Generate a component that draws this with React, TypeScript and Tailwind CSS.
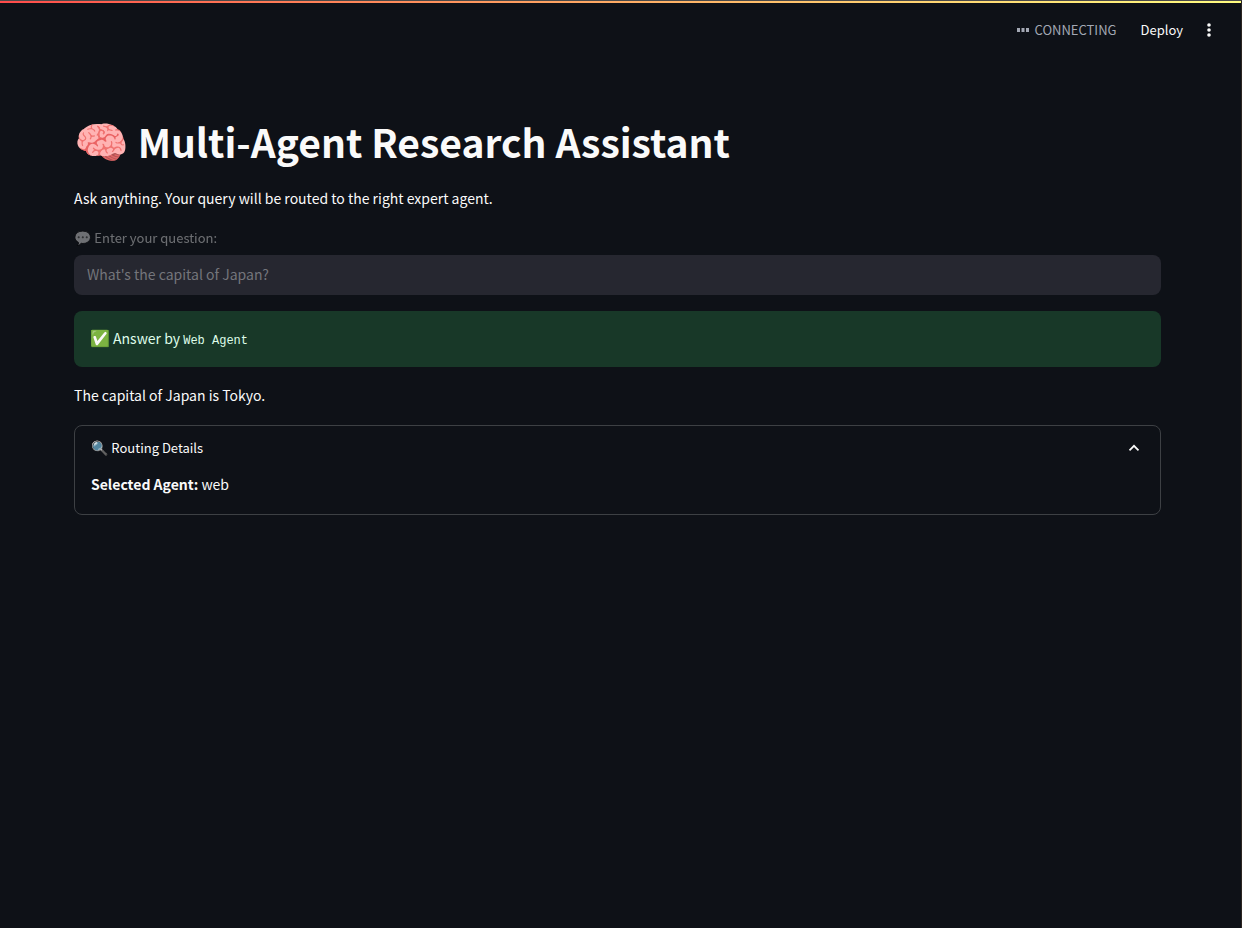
import { useState } from "react";

function MoreIcon() {
  return (
    <svg viewBox="0 0 20 20" className="size-5" fill="currentColor" aria-hidden="true">
      <circle cx="10" cy="5" r="1.8" />
      <circle cx="10" cy="10" r="1.8" />
      <circle cx="10" cy="15" r="1.8" />
    </svg>
  );
}

function Header() {
  return (
    <header>
      <div className="h-0.5 bg-linear-to-r from-[#ff4b4b] to-[#fffd80]" />
      <div className="flex h-[54px] items-center justify-end pr-[22px]">
        <div className="flex items-center gap-1.5 text-[#a3a8b4]">
          <svg viewBox="0 0 12 4" className="h-1 w-3" fill="currentColor" aria-hidden="true">
            <rect x="0" y="0" width="3" height="4" />
            <rect x="4.5" y="0" width="3" height="4" />
            <rect x="9" y="0" width="3" height="4" />
          </svg>
          <span className="text-[13px]">CONNECTING</span>
        </div>
        <button type="button" className="ml-6 text-[13px] font-normal">Deploy</button>
        <button type="button" aria-label="Main menu" className="ml-4">
          <MoreIcon />
        </button>
      </div>
    </header>
  );
}

export default function App() {
  const [question, setQuestion] = useState("");
  const [open, setOpen] = useState(true);
  return (
    <div className="min-h-screen border-t border-r border-t-[#4a4a4a] border-r-[#2c2521] bg-[#0e1117] font-['Noto_Sans_CJK_SC','Noto_Color_Emoji',sans-serif] text-[#fafafa]">
      <Header />
      <main className="flex flex-col gap-4 pt-[54px] pr-20 pl-[74px]">
        <h1 className="pt-1 pb-[3px] text-[39px] leading-[52px] font-bold">
          <span className="text-[44px] leading-none">🧠</span> Multi-Agent Research Assistant
        </h1>
        <p className="text-[14px] leading-6">Ask anything. Your query will be routed to the right expert agent.</p>
        <div className="flex flex-col gap-[7px] pt-0.5">
          <label htmlFor="question" className="text-[13px] leading-5 opacity-40">
            <span className="text-[14px] leading-none grayscale">💬</span> Enter your question:
          </label>
          <input
            id="question"
            value={question}
            onChange={(e) => setQuestion(e.target.value)}
            placeholder="What's the capital of Japan?"
            className="h-10 w-full rounded-lg bg-[#262730] px-[13px] pb-0.5 text-[14px] placeholder:text-[#74757b]"
          />
        </div>
        <div role="alert" className="rounded-lg bg-[#183828] px-4 pt-[15px] pb-[17px] text-[14px] leading-6 text-[#dffde9]">
          <span className="text-[16px] leading-none">✅</span> Answer by{" "}
          <code className="font-['Liberation_Mono',monospace] text-[12px] leading-none">Web Agent</code>
        </div>
        <p className="text-[14px] leading-6">The capital of Japan is Tokyo.</p>
        <section className="mt-0.5 rounded-lg border border-[#3d4044] px-4 pb-4">
          <button
            type="button"
            aria-expanded={open}
            onClick={() => setOpen(!open)}
            className="flex h-11 w-full items-center justify-between text-[13px]"
          >
            <span>
              <span className="text-[14px] leading-none">🔍</span> Routing Details
            </span>
            <svg viewBox="0 0 20 20" className="size-5" fill="none" stroke="currentColor" strokeWidth="1.8" aria-hidden="true">
              <path d="M5.5 12.3 10 7.8l4.5 4.5" />
            </svg>
          </button>
          {open && (
            <p className="py-0.5 text-[14px] leading-6">
              <strong className="font-bold">Selected Agent:</strong> web
            </p>
          )}
        </section>
      </main>
    </div>
  );
}
